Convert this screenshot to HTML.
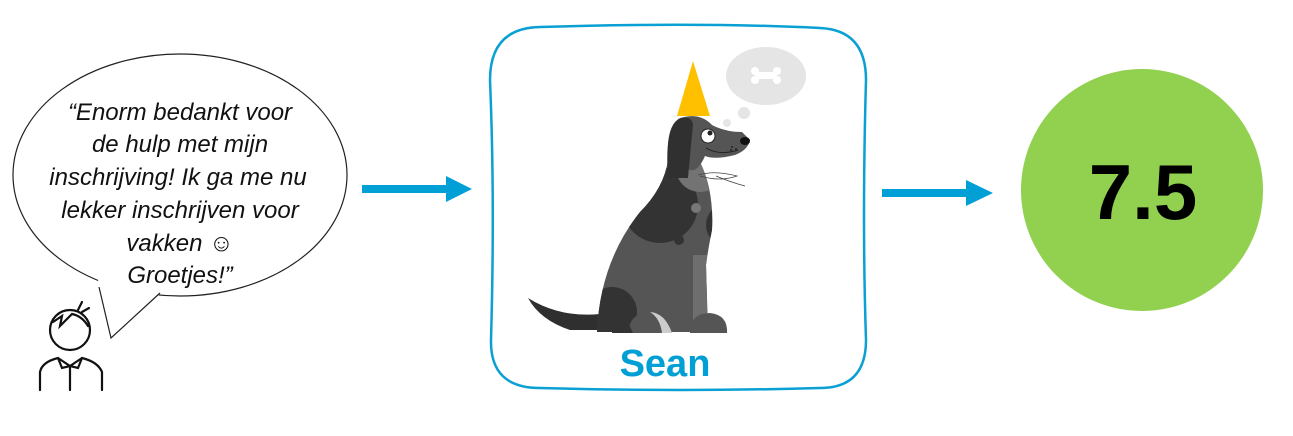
<!DOCTYPE html>
<html><head><style>
body{margin:0;background:#fff;width:1293px;height:431px;overflow:hidden}
</style></head><body>
<svg width="1293" height="431" viewBox="0 0 1293 431" xmlns="http://www.w3.org/2000/svg">
<defs>
<clipPath id="body"><path d="M597,332 Q600,262 640,212 Q664,188 668,160 L700,162 Q714,190 712,230 Q708,250 706,265 L708,330 L720,332 Z"/></clipPath>
</defs>
<ellipse cx="180" cy="175" rx="167" ry="121" fill="#fff" stroke="#222" stroke-width="1.2"/>
<path d="M98,280 L111,338 L170,285 Z" fill="#fff"/>
<path d="M99,287 L111,338 L160,293" fill="none" stroke="#222" stroke-width="1.2"/>
<g font-family="Liberation Sans, DejaVu Sans, sans-serif" font-style="italic" font-size="24" fill="#111" text-anchor="middle">
<text x="180" y="120">“Enorm bedankt voor</text>
<text x="180" y="152">de hulp met mijn</text>
<text x="178" y="185">inschrijving! Ik ga me nu</text>
<text x="180" y="218">lekker inschrijven voor</text>
<text x="180" y="251">vakken ☺</text>
<text x="180" y="283">Groetjes!”</text>
</g>
<g fill="none" stroke="#111" stroke-width="2.2" stroke-linecap="round">
<circle cx="70" cy="330" r="20"/>
<path d="M53,322 L62,316 L60,326 L72,314 Q82,316 88,326"/>
<path d="M78,310 L82,302 M82,312 L89,308"/>
<path d="M40,390 L40,372 Q42,362 58,358 L70,366 L82,358 Q98,362 102,372 L102,390"/>
<path d="M58,358 L62,368 L70,366 L78,368 L82,358 M70,368 L70,390"/>
</g>
<rect x="362" y="185" width="86" height="8" fill="#00a0d6"/>
<path d="M446,176 L472,189 L446,202 Z" fill="#00a0d6"/>
<rect x="882" y="189" width="86" height="8" fill="#00a0d6"/>
<path d="M966,180 L993,193 L966,206 Z" fill="#00a0d6"/>
<path d="M540,27 Q700,22 820,28 Q866,30 866,80 Q862,220 866,340 Q866,388 820,388 Q680,392 540,388 Q490,388 491,340 Q495,200 490,80 Q490,28 540,27 Z" fill="#fff" stroke="#0aa0d4" stroke-width="2.5"/>
<ellipse cx="766" cy="76" rx="40" ry="29" fill="#e5e5e5"/>
<circle cx="744" cy="113" r="6" fill="#e5e5e5"/>
<circle cx="727" cy="123" r="4" fill="#e5e5e5"/>
<g fill="#fff"><rect x="755" y="72" width="22" height="7" rx="2"/><circle cx="755" cy="71" r="4"/><circle cx="755" cy="80" r="4"/><circle cx="777" cy="71" r="4"/><circle cx="777" cy="80" r="4"/></g>
<path d="M693,61 L710,116 L677,116 Z" fill="#ffc000"/>
<path d="M528,298 Q560,318 600,314 L600,330 L570,330 Q540,320 528,298 Z" fill="#2f2f2f"/>
<path d="M597,332 Q600,262 640,212 Q664,188 668,160 L700,162 Q714,190 712,230 Q708,250 706,265 L708,330 L720,332 Z" fill="#555"/>
<g clip-path="url(#body)">
<circle cx="660" cy="205" r="38" fill="#333"/>
<circle cx="728" cy="225" r="22" fill="#333"/>
<circle cx="612" cy="312" r="25" fill="#333"/>
<circle cx="700" cy="168" r="24" fill="#737373"/>
<rect x="693" y="255" width="14" height="80" fill="#6e6e6e"/>
</g>
<circle cx="671" cy="229" r="3.2" fill="#333"/><circle cx="685" cy="226" r="3.2" fill="#333"/><circle cx="679" cy="240" r="5" fill="#333"/>
<circle cx="696" cy="208" r="5" fill="#777"/>
<path d="M628,333 Q630,312 650,312 Q668,313 668,333 Z" fill="#555"/>
<path d="M650,312 Q665,313 672,333 L662,333 Q660,318 650,312 Z" fill="#ccc"/>
<path d="M690,333 Q690,313 710,313 Q728,315 727,333 Z" fill="#555"/>
<path d="M633,333 L612,333 Q610,318 625,316 Z" fill="#333"/>
<path d="M668,160 Q666,125 680,118 Q700,112 712,125 Q725,132 742,132 L750,140 Q748,150 735,155 Q715,160 705,156 Q698,172 690,170 Z" fill="#555"/>
<path d="M668,178 Q664,122 682,118 Q692,116 693,125 Q690,155 688,178 Z" fill="#303030"/>
<circle cx="708" cy="136" r="7" fill="#fff" stroke="#222" stroke-width="1"/><circle cx="710" cy="133" r="2.5" fill="#222"/>
<ellipse cx="745" cy="141" rx="5" ry="4" fill="#111"/>
<circle cx="732" cy="147" r="1" fill="#222"/><circle cx="736" cy="149" r="1" fill="#222"/><circle cx="731" cy="150" r="1" fill="#222"/>
<path d="M706,148 Q720,156 738,150" fill="none" stroke="#222" stroke-width="1"/>
<path d="M698,175 Q715,170 737,176 Q720,182 700,176 M716,176 Q730,182 745,186" fill="none" stroke="#444" stroke-width="0.8"/>
<text x="665" y="376" text-anchor="middle" font-family="Liberation Sans, sans-serif" font-weight="bold" font-size="38" fill="#009fd4">Sean</text>
<circle cx="1142" cy="190" r="121" fill="#92d050"/>
<text x="1143" y="219" text-anchor="middle" font-family="Liberation Sans, sans-serif" font-weight="bold" font-size="78" fill="#000">7.5</text>
</svg>
</body></html>
